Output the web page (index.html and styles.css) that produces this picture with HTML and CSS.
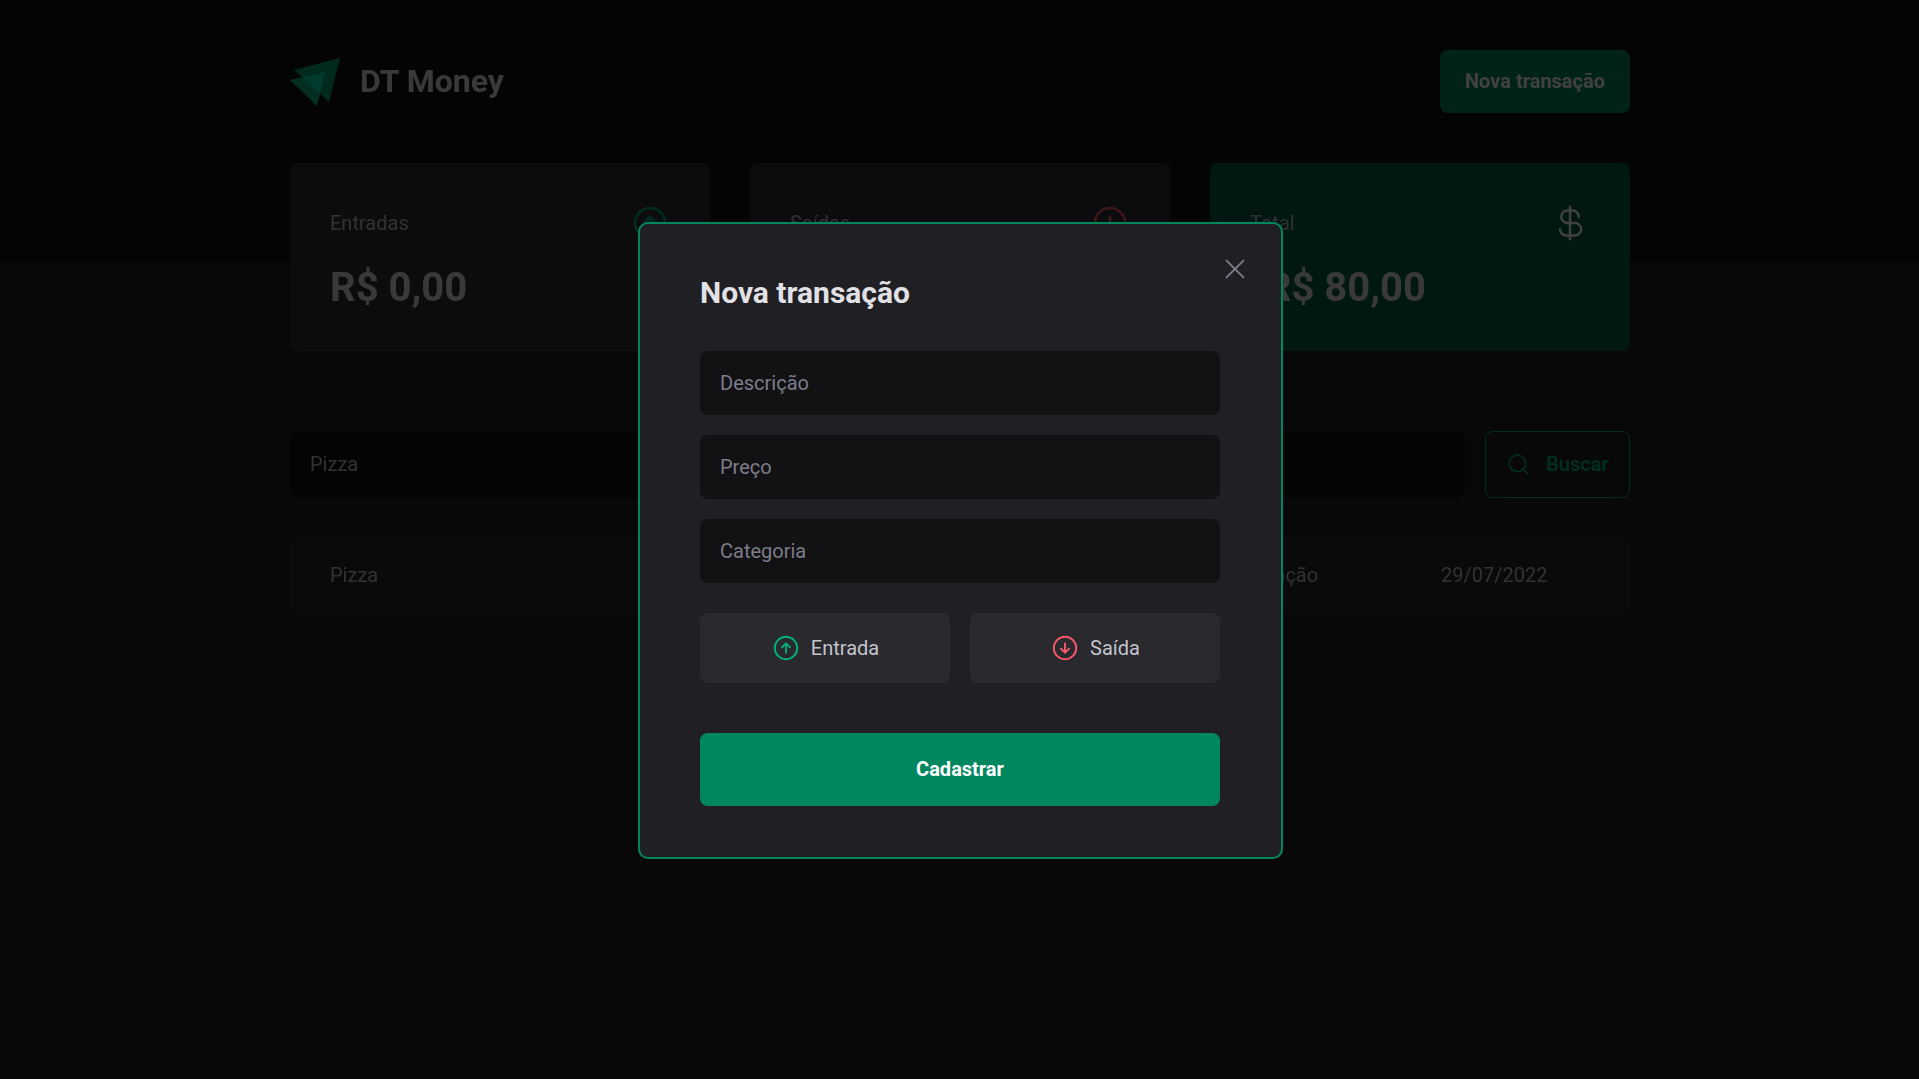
FILE: index.html
```html
<!DOCTYPE html>
<html lang="pt-BR">
<head>
<meta charset="utf-8">
<title>DT Money</title>
<link rel="stylesheet" href="styles.css">
</head>
<body>
<header class="top">
  <div class="wrap top-row">
    <div class="brand">
      <svg class="logo" viewBox="0 0 50 48"><polygon points="4,12 50,0 39,44" fill="#00A878"/><polygon class="logo-front" points="0,22 35,14 27,48" fill="#00B37E"/></svg>
      <span class="brand-name">DT Money</span>
    </div>
    <button class="new-btn">Nova transação</button>
  </div>
</header>
<main class="wrap">
  <section class="cards">
    <article class="card">
      <div class="card-head"><span>Entradas</span>
        <svg class="ico-lg up" viewBox="0 0 256 256"><circle cx="128" cy="128" r="96"/><path d="M94.1 121.9L128 88l33.9 33.9M128 168V88"/></svg>
      </div>
      <strong class="card-value">R$ 0,00</strong>
    </article>
    <article class="card">
      <div class="card-head"><span>Saídas</span>
        <svg class="ico-lg down" viewBox="0 0 256 256"><circle cx="128" cy="128" r="96"/><path d="M94.1 134.1L128 168l33.9-33.9M128 88v80"/></svg>
      </div>
      <strong class="card-value">R$ 80,00</strong>
    </article>
    <article class="card card-total">
      <div class="card-head"><span>Total</span>
        <svg class="ico-lg light" viewBox="0 0 256 256"><path d="M128 24v208M184 88a40 40 0 0 0-40-40h-32a40 40 0 0 0 0 80h48a40 40 0 0 1 0 80h-56a40 40 0 0 1-40-40"/></svg>
      </div>
      <strong class="card-value">-R$ 80,00</strong>
    </article>
  </section>
  <form class="search">
    <input class="search-input" value="Pizza" aria-label="Buscar">
    <button class="search-btn" type="button">
      <svg class="ico-md green" viewBox="0 0 256 256"><circle cx="116" cy="116" r="84"/><path d="M175.4 175.4L224 224"/></svg>
      <span class="search-label">Buscar</span>
    </button>
  </form>
  <div class="row">
    <span>Pizza</span><span class="price">- R$ 80,00</span><span>Alimentação</span><span>29/07/2022</span>
  </div>
</main>
<div class="overlay"></div>
<div class="modal">
  <button class="close" type="button" aria-label="Fechar">
    <svg class="ico-close" viewBox="0 0 256 256"><path d="M200 56L56 200M200 200L56 56"/></svg>
  </button>
  <h2 class="modal-title">Nova transação</h2>
  <form class="modal-form">
    <input class="field" placeholder="Descrição">
    <input class="field" placeholder="Preço">
    <input class="field" placeholder="Categoria">
    <div class="types">
      <button class="type" type="button">
        <svg class="ico-type up-bright" viewBox="0 0 256 256"><circle cx="128" cy="128" r="96"/><path d="M94.1 121.9L128 88l33.9 33.9M128 168V88"/></svg>
        Entrada
      </button>
      <button class="type" type="button">
        <svg class="ico-type down-bright" viewBox="0 0 256 256"><circle cx="128" cy="128" r="96"/><path d="M94.1 134.1L128 168l33.9-33.9M128 88v80"/></svg>
        Saída
      </button>
    </div>
    <button class="submit" type="button">Cadastrar</button>
  </form>
</div>
</body>
</html>
```
FILE: styles.css
```css
* { box-sizing: border-box; margin: 0; padding: 0; }
html, body { height: 100%; }
body {
  background: #202024;
  color: #C4C4CC;
  font-family: Roboto, "Liberation Sans", sans-serif;
  font-size: 20px;
  overflow: hidden;
}
button, input { font-family: inherit; font-size: 20px; border: 0; outline: 0; }
svg { display: block; fill: none; stroke: currentColor; stroke-linecap: round; stroke-linejoin: round; flex: none; }

.wrap { width: 1340px; margin-left: 290px; }

.top { background: #121214; padding: 50px 0 149px; }
.top-row { display: flex; align-items: center; justify-content: space-between; }
.brand { display: flex; align-items: center; gap: 20px; }
.logo { width: 50px; height: 48px; stroke: none; }
.logo-front { mix-blend-mode: screen; }
.brand-name { font-size: 32px; line-height: 40px; margin-bottom: 2px; font-weight: 700; color: #E1E1E6; }
.new-btn {
  height: 63px; width: 190px; padding-bottom: 2px; border-radius: 7.5px;
  background: #00875F; color: #fff; font-weight: 700;
}

.cards { display: grid; grid-template-columns: repeat(3, 1fr); gap: 40px; margin-top: -99px; }
.card { background: #323238; border-radius: 7.5px; padding: 40px; height: 188px; }
.card-total { background: #015F43; }
.card-head { display: flex; align-items: center; justify-content: space-between; height: 40px; }
.card-value { display: block; margin-top: 21px; font-size: 40px; line-height: 48px; font-weight: 700; color: #E1E1E6; }
.ico-lg { width: 40px; height: 40px; stroke-width: 16; }
.up { color: #00B37E; }
.down { color: #F75A68; }
.light { color: #fff; }

.search { display: flex; gap: 20px; margin-top: 80px; }
.search-input {
  flex: 1; height: 67px; padding: 0 20px 2px; border-radius: 7.5px;
  background: #121214; color: #C4C4CC;
}
.search-btn {
  display: flex; align-items: center; gap: 15px;
  width: 145px; height: 67px; padding: 0 20px;
  background: transparent; border: 1px solid #00B37E; border-radius: 7.5px;
  color: #00B37E; font-weight: 700;
}
.search-label { margin-bottom: 2px; }
.ico-md { width: 25px; height: 25px; stroke-width: 16; }
.green { color: #00B37E; }

.row {
  display: grid; grid-template-columns: 603px 273px 235px 1fr;
  align-items: center; height: 75px; margin-top: 39px; padding-left: 40px;
  background: #29292E; border-radius: 7.5px;
}
.price { color: #F75A68; }

.overlay { position: fixed; inset: 0; background: rgba(0, 0, 0, .75); }

.modal {
  position: fixed; left: 638px; top: 222px; width: 645px; height: 637px;
  padding: 51px 61px 51px 60px;
  background: #202024; border: 2px solid #00875F; border-radius: 10px;
}
.close { position: absolute; top: 30px; right: 31px; width: 30px; height: 30px; background: none; color: #7C7C8A; }
.ico-close { width: 30px; height: 30px; stroke-width: 16; }
.modal-title { font-size: 30px; line-height: 36px; font-weight: 700; color: #E1E1E6; }
.modal-form { display: flex; flex-direction: column; gap: 20px; margin-top: 40px; }
.field {
  height: 64px; padding: 0 20px; border-radius: 7.5px;
  background: #121214; color: #C4C4CC;
}
.field::placeholder { color: #7C7C8A; opacity: 1; }
.types { display: grid; grid-template-columns: 1fr 1fr; gap: 20px; margin-top: 10px; }
.type {
  display: flex; align-items: center; justify-content: center; gap: 10px;
  height: 70px; border-radius: 7.5px; background: #29292E; color: #C4C4CC;
}
.ico-type { width: 30px; height: 30px; stroke-width: 16; }
.up-bright { color: #00B37E; }
.down-bright { color: #F75A68; }
.submit {
  height: 73px; margin-top: 30px; padding-bottom: 2px; border-radius: 7.5px;
  background: #00875F; color: #fff; font-weight: 700;
}
```
